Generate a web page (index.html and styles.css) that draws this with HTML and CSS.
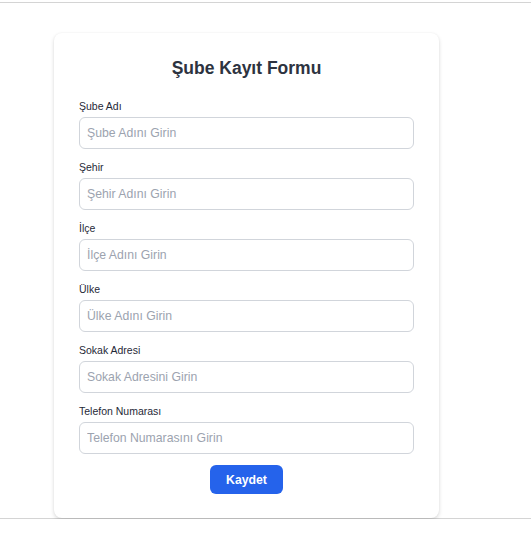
FILE: index.html
```html
<!DOCTYPE html>
<html lang="tr">
<head>
<meta charset="utf-8">
<title>Şube Kayıt Formu</title>
<link rel="stylesheet" href="styles.css">
</head>
<body>
<div class="page">
  <form class="card">
    <h2 class="title">Şube Kayıt Formu</h2>
    <div class="group">
      <label class="label">Şube Adı</label>
      <input class="input" type="text" placeholder="Şube Adını Girin">
    </div>
    <div class="group">
      <label class="label">Şehir</label>
      <input class="input" type="text" placeholder="Şehir Adını Girin">
    </div>
    <div class="group">
      <label class="label">İlçe</label>
      <input class="input" type="text" placeholder="İlçe Adını Girin">
    </div>
    <div class="group">
      <label class="label">Ülke</label>
      <input class="input" type="text" placeholder="Ülke Adını Girin">
    </div>
    <div class="group">
      <label class="label">Sokak Adresi</label>
      <input class="input" type="text" placeholder="Sokak Adresini Girin">
    </div>
    <div class="group">
      <label class="label">Telefon Numarası</label>
      <input class="input" type="text" placeholder="Telefon Numarasını Girin">
    </div>
    <div class="actions">
      <button class="btn" type="button">Kaydet</button>
    </div>
  </form>
</div>
</body>
</html>
```
FILE: styles.css
```css
* { box-sizing: border-box; }
html, body { margin: 0; padding: 0; background: #fff; }
body { font-family: "Liberation Sans", Arial, sans-serif; }

.page {
  margin-top: 2px;
  border-top: 1px solid #d4d4d4;
  border-bottom: 1px solid #d4d4d4;
  padding-top: 30px;
}

.card {
  width: 385px;
  margin-left: 54px;
  background: #fff;
  border-radius: 8px;
  box-shadow: 0 2px 4px rgba(0,0,0,0.14), 0 0 2px rgba(0,0,0,0.05);
  padding: 21px 25px 24px 25px;
}

.title {
  margin: 0 0 17px 0;
  text-align: center;
  font-size: 17.5px;
  line-height: 28px;
  font-weight: 700;
  color: #2d3340;
}

.group {
  display: flex;
  flex-direction: column;
  margin-bottom: 11px;
}

.label {
  font-size: 10.5px;
  line-height: 15px;
  color: #1f2937;
  margin-bottom: 3px;
}

.input {
  height: 32px;
  width: 100%;
  border: 1px solid #d1d5db;
  border-radius: 6px;
  padding: 0 7px;
  font-family: "Liberation Sans", Arial, sans-serif;
  font-size: 12.25px;
  color: #111827;
  background: #fff;
  outline: none;
}
.input::placeholder { color: #9ca3af; }

.actions {
  display: flex;
  justify-content: center;
}

.btn {
  height: 29px;
  width: 73px;
  border: none;
  border-radius: 6px;
  background: #2563eb;
  color: #fff;
  font-family: "Liberation Sans", Arial, sans-serif;
  font-size: 12.25px;
  font-weight: 700;
  cursor: pointer;
}
```
